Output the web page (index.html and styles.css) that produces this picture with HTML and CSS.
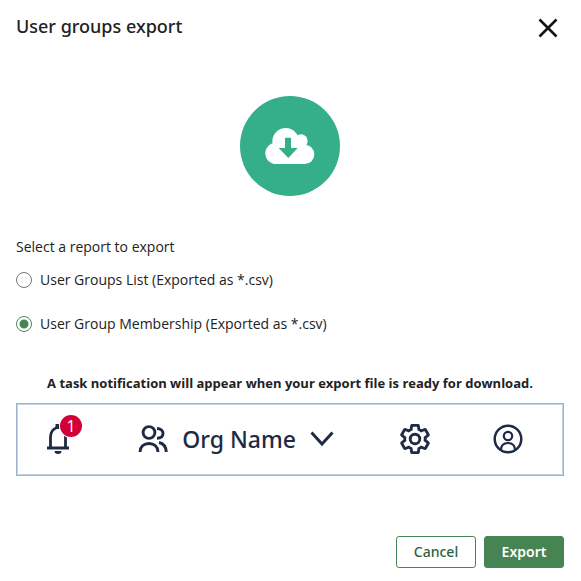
FILE: index.html
```html
<!DOCTYPE html>
<html lang="en">
<head>
<meta charset="utf-8">
<title>User groups export</title>
<link rel="stylesheet" href="styles.css">
</head>
<body>
<form class="dialog">
  <header class="dialog-header">
    <h1 class="title">User groups export</h1>
    <button class="close" type="button" aria-label="Close">
      <svg width="20" height="20" viewBox="0 0 20 20"><path d="M1.5 1.5l17 17M18.5 1.5l-17 17" fill="none" stroke="currentColor" stroke-width="2.6"/></svg>
    </button>
  </header>
  <div class="hero">
    <svg width="50" height="36" viewBox="106 126 150 108">
      <g fill="#fff">
        <circle cx="139" cy="202" r="32"/>
        <circle cx="168" cy="166" r="40"/>
        <circle cx="214" cy="165" r="20"/>
        <circle cx="225" cy="205" r="29"/>
        <path d="M139 180h86v54h-86z"/>
      </g>
      <path d="M166 155h18v31h20l-28 30-29-30h19z" fill="#34af8a"/>
    </svg>
  </div>
  <fieldset class="reports">
    <legend class="legend">Select a report to export</legend>
    <label class="option"><input class="radio" type="radio" name="report">User Groups List (Exported as *.csv)</label>
    <label class="option"><input class="radio" type="radio" name="report" checked>User Group Membership (Exported as *.csv)</label>
  </fieldset>
  <p class="note">A task notification will appear when your export file is ready for download.</p>
  <div class="preview">
    <div class="bell">
      <svg width="24" height="32" viewBox="0 0 24 32" fill="none" stroke="currentColor" stroke-width="2.8">
        <path d="M1 25h22M4.500 25V14C4.500 9 7 6 11 4.500M19.500 25V9"/>
        <path d="M9.500 1h4v5h-4z" fill="currentColor" stroke="none"/>
        <path d="M8.500 28h7a3.500 3 0 0 1-7 0z" fill="currentColor" stroke="none"/>
      </svg>
      <span class="badge">1</span>
    </div>
    <div class="org">
      <svg width="30" height="28" viewBox="0 0 30 28" fill="none" stroke="currentColor" stroke-width="2.900">
        <circle cx="11" cy="7.500" r="5.900"/>
        <path d="M2 27C2.300 21.500 6 18.500 11 18.500S19.700 21.500 20 27M19 3.500C22.500 3.500 25 5.500 25 8.500S22.500 13.200 19 13.200M21 17.500C25.500 18.500 28 22 28.300 27"/>
      </svg>
      <span class="org-name">Org Name</span>
      <svg width="24" height="16" viewBox="0 0 24 16" fill="none" stroke="currentColor" stroke-width="3"><path d="M1.500 1.500L12 13 22.500 1.500"/></svg>
    </div>
    <svg width="30" height="30" viewBox="1 1 22 22" fill="none" stroke="currentColor" stroke-width="2.100">
      <path d="M19.430 12.980c.04-.32.07-.64.07-.98 0-.34-.03-.66-.07-.98l2.110-1.650c.19-.15.24-.42.12-.64l-2-3.460c-.09-.16-.26-.25-.44-.25-.06 0-.12.01-.17.03l-2.490 1c-.52-.4-1.080-.73-1.690-.98l-.38-2.650C14.460 2.180 14.250 2 14 2h-4c-.25 0-.46.18-.49.42l-.38 2.650c-.61.25-1.170.59-1.690.98l-2.490-1c-.06-.02-.12-.03-.18-.03-.17 0-.34.09-.43.25l-2 3.460c-.13.22-.07.49.12.64l2.110 1.650c-.04.32-.07.65-.07.98 0 .33.03.66.07.98l-2.110 1.650c-.19.15-.24.42-.12.64l2 3.460c.09.16.26.25.44.25.06 0 .12-.01.17-.03l2.490-1c.52.4 1.080.73 1.690.98l.38 2.650c.03.24.24.42.49.42h4c.25 0 .46-.18.49-.42l.38-2.650c.61-.25 1.170-.59 1.690-.98l2.490 1c.06.02.12.03.18.03.17 0 .34-.09.43-.25l2-3.460c.12-.22.07-.49-.12-.64l-2.110-1.650z"/>
      <circle cx="12" cy="12" r="3.500"/>
    </svg>
    <svg width="30" height="30" viewBox="0 0 30 30" fill="none" stroke="currentColor" stroke-width="2.500">
      <circle cx="15" cy="15" r="13.300"/>
      <circle cx="15" cy="12" r="4.200" stroke-width="2.200"/>
      <path d="M8 26.500C8 21.500 10.500 19 15 19s7 2.500 7 7.500" stroke-width="2.200"/>
    </svg>
  </div>
  <footer class="actions">
    <button class="btn" type="button">Cancel</button>
    <button class="btn btn-primary" type="submit">Export</button>
  </footer>
</form>
</body>
</html>
```
FILE: styles.css
```css
* {
  box-sizing: border-box;
}

body {
  margin: 0;
  background: #fff;
  color: #222;
  font: 14px/20px "Open Sans", "Noto Sans", sans-serif;
}

svg {
  display: block;
}

.dialog {
  display: flex;
  flex-direction: column;
  padding: 12px 17px 12px 16px;
}

.dialog-header {
  display: flex;
  justify-content: space-between;
  align-items: flex-start;
}

.title {
  margin: 0;
  font-family: "Noto Sans", sans-serif;
  font-size: 18px;
  font-weight: 500;
  line-height: 28px;
}

.close {
  margin: 0;
  padding: 6px;
  border: 0;
  background: none;
  color: #161616;
}

.hero {
  display: flex;
  align-items: center;
  justify-content: center;
  align-self: center;
  width: 100px;
  height: 100px;
  margin-top: 52px;
  border-radius: 50%;
  background: #34af8a;
}

.reports {
  margin: 40px 0 0;
  padding: 0;
  border: 0;
}

.legend {
  padding: 0;
  line-height: 22px;
}

.option {
  display: flex;
  align-items: center;
  gap: 8px;
  height: 44px;
}

.radio {
  appearance: none;
  width: 16px;
  height: 16px;
  margin: 0;
  border: 1px solid #767676;
  border-radius: 50%;
  background: #fff;
}

.radio:checked {
  border-color: #478453;
  background: radial-gradient(circle, #478453 4px, #fff 5px);
}

.note {
  margin: 27px 0 10px;
  font-size: 13px;
  font-weight: 700;
  text-align: center;
}

.preview {
  display: grid;
  grid-template-columns: 92fr 261fr 93fr 70fr;
  align-items: center;
  height: 73px;
  padding: 0 0 1px 29px;
  border: 1px solid #9db3cf;
  box-shadow: inset 0 0 0 1px #c2d3e6;
  color: #1e2b45;
}

.bell {
  position: relative;
  width: 24px;
}

.badge {
  position: absolute;
  top: -8px;
  left: 14px;
  width: 22px;
  height: 22px;
  border-radius: 50%;
  background: #d20038;
  box-shadow: 0 0 0 1px #fff;
  color: #fff;
  font-size: 16px;
  line-height: 22px;
  text-align: center;
}

.org {
  display: flex;
  align-items: center;
  gap: 14px;
}

.org-name {
  font-family: "Noto Sans", sans-serif;
  font-size: 23px;
  font-weight: 500;
  line-height: 32px;
}

.actions {
  display: flex;
  justify-content: flex-end;
  gap: 8px;
  margin-top: 60px;
}

.btn {
  min-width: 80px;
  height: 32px;
  padding: 0 16px;
  border: 1px solid #478453;
  border-radius: 3px;
  background: #fff;
  color: #2c6044;
  font: 500 14px/20px "Noto Sans", sans-serif;
}

.btn-primary {
  background: #478453;
  color: #fff;
  font-weight: 600;
}
```
